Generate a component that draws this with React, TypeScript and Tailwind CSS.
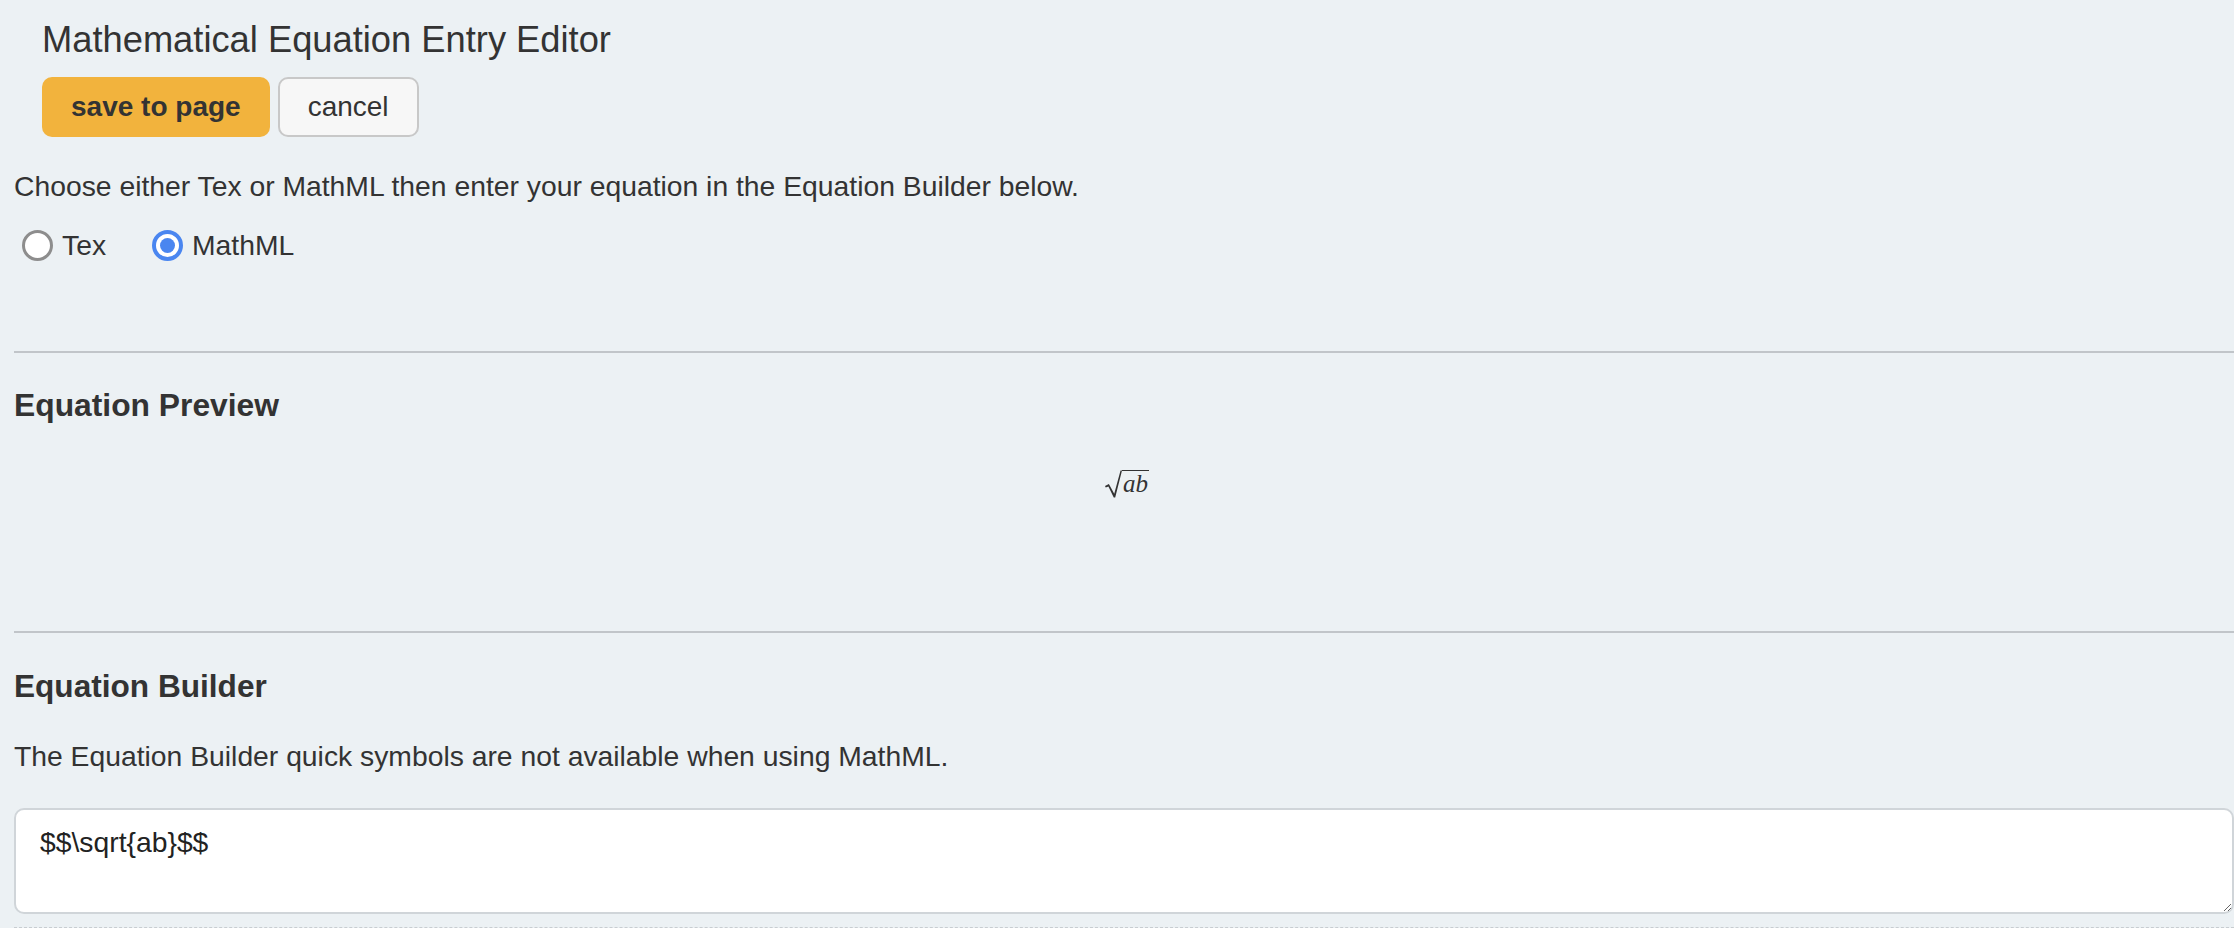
import React from "react";

function Radio({ checked, label }: { checked: boolean; label: string }) {
  return (
    <label className="flex items-center gap-[9px] cursor-pointer">
      {checked ? (
        <span className="flex h-[31px] w-[31px] items-center justify-center rounded-full border-[4px] border-[#4a86f0] bg-white">
          <span className="block h-[15px] w-[15px] rounded-full bg-[#4a86f0]" />
        </span>
      ) : (
        <span className="block h-[31px] w-[31px] rounded-full border-[3px] border-[#8d8d8d] bg-white" />
      )}
      <span>{label}</span>
    </label>
  );
}

export default function App() {
  return (
    <div
      className="min-h-screen w-full overflow-hidden bg-[#ecf1f4] pl-[14px] pt-[18px] text-[#333333]"
      style={{ fontFamily: '"Liberation Sans", Arial, Helvetica, sans-serif' }}
    >
      <div className="pl-[28px] text-[36.3px] leading-[44px]">Mathematical Equation Entry Editor</div>

      <div className="mt-[15px] flex gap-[8px] pl-[28px]">
        <button className="h-[60px] rounded-[10px] bg-[#f2b33d] px-[29px] text-[28px] font-bold text-[#333333]">
          save to page
        </button>
        <button className="h-[60px] rounded-[10px] border-2 border-[#c8c8c8] bg-[#f7f7f7] px-[28px] text-[28px] text-[#333333]">
          cancel
        </button>
      </div>

      <p className="mt-[29px] text-[28.3px] leading-[40px]">
        Choose either Tex or MathML then enter your equation in the Equation Builder below.
      </p>

      <div className="mt-[19px] flex h-[40px] items-center gap-[46px] pl-[8px] text-[28.3px] leading-[40px]">
        <Radio checked={false} label="Tex" />
        <Radio checked={true} label="MathML" />
      </div>

      <div className="mt-[86px] border-t-2 border-[#c1c5c9]" />

      <h2 className="mt-[32px] text-[31.8px] font-bold leading-[40px]">Equation Preview</h2>

      <div className="h-[206px] pt-[45px] text-center">
        <span className="ml-[6px] inline-flex items-start">
          <svg width="17" height="28" viewBox="0 0 17.5 28" className="block">
            <path
              d="M0 16 L4 14 L9.5 24 L16 0 L17.5 0 L10.5 28 L9 28 L3.5 16.6 L0.8 17.6 Z"
              fill="#333333"
            />
          </svg>
          <span
            className="block border-t-[1.5px] border-[#333333] pl-[1px] pr-[1px] text-[25px] italic leading-[26px]"
            style={{ fontFamily: '"Liberation Serif", "Times New Roman", serif' }}
          >
            ab
          </span>
        </span>
      </div>

      <div className="border-t-2 border-[#c1c5c9]" />

      <h2 className="mt-[33px] text-[31.6px] font-bold leading-[40px]">Equation Builder</h2>

      <p className="mt-[30px] text-[28.3px] leading-[40px]">
        The Equation Builder quick symbols are not available when using MathML.
      </p>

      <textarea
        className="mt-[32px] block h-[106px] w-full rounded-[10px] border-2 border-[#d0d5d9] bg-white px-[24px] py-[12px] text-[28.3px] leading-[40px] text-[#222222] outline-none"
        style={{ fontFamily: '"Liberation Sans", Arial, Helvetica, sans-serif' }}
        defaultValue={"$$\\sqrt{ab}$$"}
      />

      <div className="mt-[13px] border-t border-dashed border-[#c8cdd1]" />
    </div>
  );
}
